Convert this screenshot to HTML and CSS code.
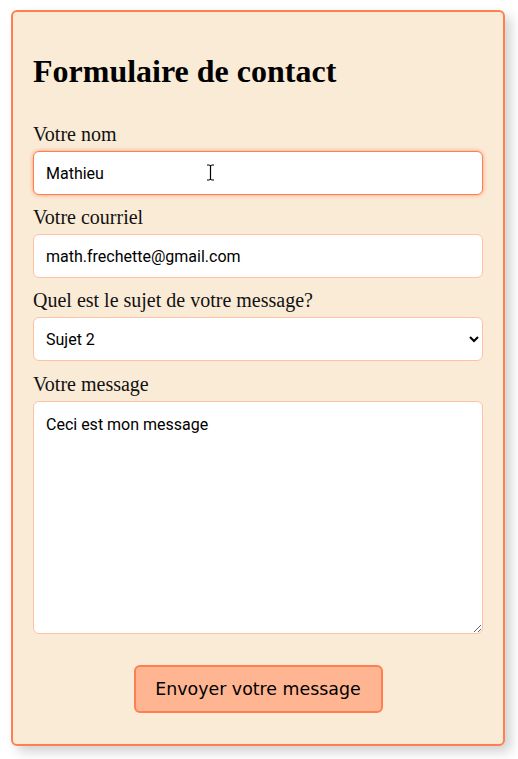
FILE: index.html
```html
<!DOCTYPE html>
<html lang="fr">
<head>
<meta charset="utf-8">
<title>Formulaire de contact</title>
<link rel="stylesheet" href="styles.css">
</head>
<body>
<form class="card">
  <h1 class="title">Formulaire de contact</h1>
  <div class="group group-first">
    <label class="label" for="nom">Votre nom</label>
    <div class="field-wrap">
      <input class="field field-focus" id="nom" type="text" value="Mathieu">
      <svg class="cursor" width="9" height="17" viewBox="0 0 9 17"><path d="M1 1h2.5M5.5 1H8M4.5 1.5v14M1 16h2.5M5.5 16H8M3.5 1.5h2M3.5 15.5h2" stroke="#000" stroke-width="1.2" fill="none"/></svg>
    </div>
  </div>
  <div class="group">
    <label class="label" for="courriel">Votre courriel</label>
    <input class="field" id="courriel" type="email" value="math.frechette@gmail.com">
  </div>
  <div class="group">
    <label class="label" for="sujet">Quel est le sujet de votre message?</label>
    <select class="field select" id="sujet">
      <option>Sujet 1</option>
      <option selected>Sujet 2</option>
      <option>Sujet 3</option>
    </select>
  </div>
  <div class="group group-area">
    <label class="label" for="message">Votre message</label>
    <textarea class="field area" id="message">Ceci est mon message</textarea>
  </div>
  <div class="actions">
    <button class="btn" type="button">Envoyer votre message</button>
  </div>
</form>
</body>
</html>
```
FILE: styles.css
```css
html, body {
  margin: 0;
  padding: 0;
  background: #ffffff;
}
body {
  padding: 10px 13px 14px 11px;
  font-family: "Liberation Serif", "Times New Roman", serif;
}
.card {
  background: #faebd7;
  border: 2px solid #ff7f50;
  border-radius: 6px;
  padding: 20px 20px 31px 20px;
  box-shadow: 6px 6px 12px rgba(0, 0, 0, 0.18);
  display: flex;
  flex-direction: column;
}
.title {
  font-family: "Liberation Serif", "Times New Roman", serif;
  font-size: 32px;
  font-weight: bold;
  margin: 21px 0 21px 0;
  line-height: 37px;
}
.group {
  display: flex;
  flex-direction: column;
  margin-top: 11px;
}
.group-first {
  margin-top: 12px;
}
.group-area {
  margin-top: 12px;
}
.label {
  font-size: 20px;
  line-height: 23px;
  color: #111;
  margin-bottom: 5px;
}
.field-wrap {
  position: relative;
  display: flex;
}
.field {
  box-sizing: border-box;
  width: 100%;
  height: 44px;
  border: 1px solid #ffc1a6;
  border-radius: 6px;
  background: #ffffff;
  padding: 0 12px;
  font-family: Roboto, "Liberation Sans", sans-serif;
  font-size: 16px;
  color: #000;
  outline: none;
}
.field-focus {
  border-color: #ff7f50;
  box-shadow: 0 0 4px #ff9a70;
}
.cursor {
  position: absolute;
  left: 173px;
  top: 13px;
}
.select {
  padding-left: 8px;
}
.area {
  height: 233px;
  padding: 13px 12px;
  resize: vertical;
  line-height: 20px;
}
.actions {
  display: flex;
  justify-content: center;
  margin-top: 31px;
}
.btn {
  box-sizing: border-box;
  width: 249px;
  height: 48px;
  background: #ffb592;
  border: 2px solid #ff7f50;
  border-radius: 6px;
  font-family: "DejaVu Sans", Verdana, sans-serif;
  font-size: 17.4px;
  color: #000;
  cursor: pointer;
  padding: 0;
}
```
